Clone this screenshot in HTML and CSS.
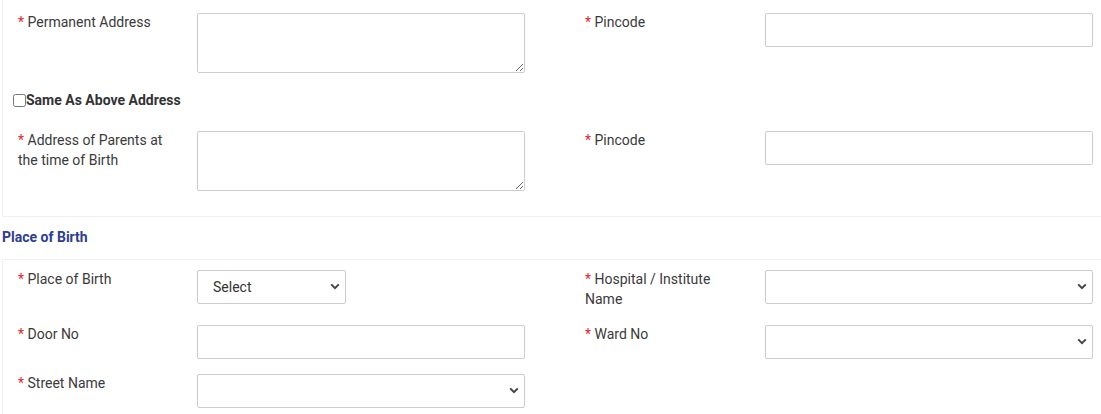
FILE: index.html
```html
<!DOCTYPE html>
<html>
<head>
<meta charset="utf-8">
<link rel="stylesheet" href="styles.css">
</head>
<body>
<div class="page">
  <div class="panel panel-top">
    <div class="row">
      <div class="field">
        <label class="lbl"><span class="req">*</span> Permanent Address</label>
        <textarea class="ctl area"></textarea>
      </div>
      <div class="field field-r">
        <label class="lbl"><span class="req">*</span> Pincode</label>
        <input class="ctl" type="text">
      </div>
    </div>
    <div class="check-row">
      <input type="checkbox" class="cb"><span class="cb-text">Same As Above Address</span>
    </div>
    <div class="row">
      <div class="field">
        <label class="lbl"><span class="req">*</span> Address of Parents at the time of Birth</label>
        <textarea class="ctl area"></textarea>
      </div>
      <div class="field field-r">
        <label class="lbl"><span class="req">*</span> Pincode</label>
        <input class="ctl" type="text">
      </div>
    </div>
  </div>

  <h3 class="section-title">Place of Birth</h3>

  <div class="panel panel-bottom">
    <div class="row">
      <div class="field">
        <label class="lbl"><span class="req">*</span> Place of Birth</label>
        <div class="sel-wrap sel-small">
          <select class="ctl sel"><option>Select</option></select>
          <svg class="chev" width="10" height="7" viewBox="0 0 10 7"><path d="M1.2 1.4 L5 5.2 L8.8 1.4" fill="none" stroke="#444" stroke-width="2"/></svg>
        </div>
      </div>
      <div class="field field-r">
        <label class="lbl"><span class="req">*</span> Hospital / Institute Name</label>
        <div class="sel-wrap">
          <select class="ctl sel"><option></option></select>
          <svg class="chev" width="10" height="7" viewBox="0 0 10 7"><path d="M1.2 1.4 L5 5.2 L8.8 1.4" fill="none" stroke="#444" stroke-width="2"/></svg>
        </div>
      </div>
    </div>
    <div class="row">
      <div class="field">
        <label class="lbl"><span class="req">*</span> Door No</label>
        <input class="ctl" type="text">
      </div>
      <div class="field field-r">
        <label class="lbl"><span class="req">*</span> Ward No</label>
        <div class="sel-wrap">
          <select class="ctl sel"><option></option></select>
          <svg class="chev" width="10" height="7" viewBox="0 0 10 7"><path d="M1.2 1.4 L5 5.2 L8.8 1.4" fill="none" stroke="#444" stroke-width="2"/></svg>
        </div>
      </div>
    </div>
    <div class="row row-last">
      <div class="field">
        <label class="lbl"><span class="req">*</span> Street Name</label>
        <div class="sel-wrap">
          <select class="ctl sel"><option></option></select>
          <svg class="chev" width="10" height="7" viewBox="0 0 10 7"><path d="M1.2 1.4 L5 5.2 L8.8 1.4" fill="none" stroke="#444" stroke-width="2"/></svg>
        </div>
      </div>
    </div>
  </div>
</div>
</body>
</html>
```

FILE: styles.css
```css
html, body {
  margin: 0;
  padding: 0;
  background: #fff;
  overflow: hidden;
}
body {
  font-family: Roboto, "Liberation Sans", Arial, sans-serif;
  font-size: 14px;
  color: #333;
}
.page {
  width: 1140px;
  padding-left: 2px;
}
.panel {
  border: 1px solid #f0f0f0;
  padding-left: 15px;
}
.panel-top {
  border-top: none;
  padding-top: 12px;
  padding-bottom: 25px;
}
.panel-bottom {
  padding-top: 9px;
  padding-bottom: 0;
}
.row {
  display: flex;
  align-items: flex-start;
  gap: 60px;
  margin-bottom: 15px;
}
.row-last {
  margin-top: -1px;
}
.panel-top .row {
  margin-bottom: 0;
}
.field {
  display: grid;
  grid-template-columns: 179px 328px;
  align-items: start;
}
.field-r {
  grid-template-columns: 180px 328px;
}
.lbl {
  line-height: 20px;
  padding-right: 20px;
  color: #3a3a3a;
}
.req {
  color: #e8262b;
}
.ctl {
  box-sizing: border-box;
  width: 328px;
  height: 34px;
  margin: 1px 0 0 0;
  border: 1px solid #cccccc;
  border-radius: 2px;
  background: #fff;
  font-family: inherit;
  font-size: 14px;
  color: #333;
  padding: 6px 12px;
}
.area {
  height: 60px;
  resize: vertical;
  display: block;
}
.check-row {
  display: flex;
  align-items: center;
  height: 20px;
  margin: 17px 0 20px -5px;
}
.cb {
  width: 13px;
  height: 13px;
  margin: 0;
}
.cb-text {
  font-weight: bold;
  color: #333;
  line-height: 20px;
}
.section-title {
  margin: 0;
  padding: 10px 0 12px;
  font-size: 14px;
  line-height: 20px;
  font-weight: bold;
  color: #2d3c95;
}
.sel-wrap {
  position: relative;
  width: 328px;
}
.sel-small {
  width: 149px;
}
.sel {
  appearance: none;
  -webkit-appearance: none;
  width: 100%;
  padding: 6px 15px;
  display: block;
}
.chev {
  position: absolute;
  right: 6px;
  top: 14px;
  pointer-events: none;
}
```
